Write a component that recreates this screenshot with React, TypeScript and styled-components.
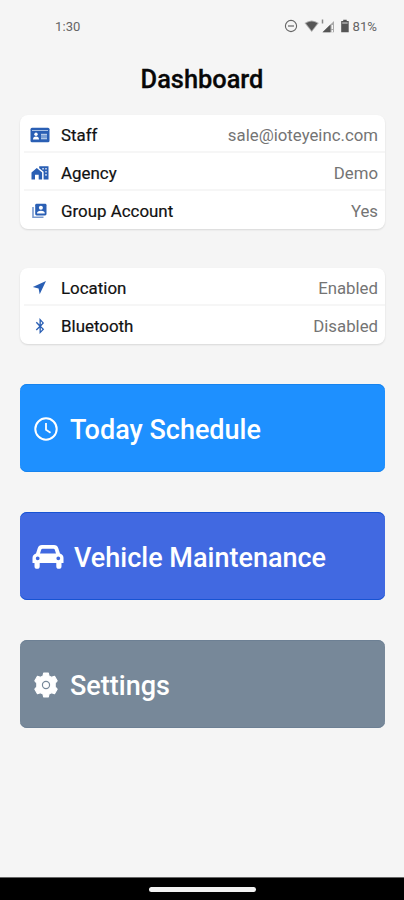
import React from 'react';
import styled, { createGlobalStyle } from 'styled-components';
import { FaBluetoothB } from 'react-icons/fa';

const GlobalStyle = createGlobalStyle`
  * { box-sizing: border-box; }
  body { margin: 0; background: #f5f5f5; font-family: Roboto, sans-serif; }
`;

const Screen = styled.div`
  width: 404px;
  height: 900px;
  display: flex;
  flex-direction: column;
  background: #f5f5f5;
  overflow: hidden;
`;

const StatusBar = styled.header`
  height: 52px;
  padding: 0 27px 0 55px;
  display: flex;
  align-items: center;
  justify-content: space-between;
  color: #656565;
  font-size: 13px;
`;

const Time = styled.span`
  letter-spacing: 0.1px;
`;

const StatusIcons = styled.div`
  display: flex;
  align-items: center;
`;

const Percent = styled.span`
  margin-left: 2px;
  font-size: 13.2px;
`;

const Title = styled.h1`
  margin: 0;
  height: 63px;
  padding-top: 11px;
  line-height: 33px;
  font-size: 25.4px;
  font-weight: 500;
  text-align: center;
  color: #080808;
  -webkit-text-stroke: 0.3px #080808;
`;

const Content = styled.main`
  flex: 1;
  padding: 0 19px 0 20px;
`;

const Card = styled.section`
  background: #fff;
  border-radius: 8px;
  margin-bottom: 39px;
  padding-left: 4px;
  box-shadow: 0 1px 2px rgba(0, 0, 0, 0.12);
`;

const Row = styled.div`
  height: 38px;
  display: flex;
  align-items: center;
  padding: 3px 7px 0 5px;
  border-bottom: 2px solid #f6f6f6;
  font-size: 16.9px;
  &:last-child {
    padding-top: 1px;
    border-bottom: 0;
  }
`;

const RowIcon = styled.span`
  width: 21px;
  display: flex;
  justify-content: center;
  color: #2a5fb4;
`;

const Label = styled.span`
  margin-left: 11px;
  color: #111;
  -webkit-text-stroke: 0.2px #111;
`;

const Value = styled.span`
  margin-left: auto;
  color: #747474;
  font-size: 16.8px;
`;

const ActionButton = styled.button<{ $color: string; $edge: string; $gap: number }>`
  width: 100%;
  height: 88px;
  margin: 0 0 40px;
  padding: 3px 12px 0;
  display: flex;
  align-items: center;
  gap: ${(p) => p.$gap}px;
  border: 0;
  border-radius: 7px;
  box-shadow: inset 0 1px ${(p) => p.$edge}, inset 0 -1px ${(p) => p.$edge};
  background: ${(p) => p.$color};
  color: #fff;
  font: 500 27px/36px Roboto, sans-serif;
`;

const Actions = styled.nav`
  padding-top: 1px;
`;

const ButtonIcon = styled.span<{ $width: number }>`
  width: ${(p) => p.$width}px;
  display: flex;
  justify-content: center;
  margin-top: -2px;
`;

const NavigationBar = styled.footer`
  height: 23px;
  background: #000;
  border-top: 1px solid #666;
  display: flex;
  align-items: center;
  justify-content: center;
`;

const HomeHandle = styled.div`
  width: 107px;
  height: 5px;
  border-radius: 3px;
  background: #f2f2f2;
`;

const StatusGlyphs = () => (
  <svg width="67" height="16" viewBox="0 0 67 16" fill="none">
    <circle cx="7" cy="8" r="5.6" stroke="#666" strokeWidth="1.1" />
    <path d="M4 8h6" stroke="#666" strokeWidth="1.2" />
    <path d="M20.5 5.1Q27.7-.2 34.8 5.1L27.7 14Z" fill="#aaa" />
    <path d="M22 5.3Q27.7 1.5 33.4 5.3L27.7 12.7Z" fill="#555" />
    <path d="M38.5 1.5v4" stroke="#888" strokeWidth="1.5" />
    <path d="M38.5 14.2 50 3v11.2z" fill="#aaa" />
    <path d="M38.5 14.2 46.5 6.4v7.8z" fill="#555" />
    <path d="M48.3 7v4M48.3 12v2" stroke="#f5f5f5" strokeWidth="1.4" />
    <path d="M57.2 3h2V1.8h3.5V3h2v11.2h-7.5z" fill="#555" />
    <path d="M58.2 4h5.5v2h-5.5z" fill="#999" />
  </svg>
);

const StaffIcon = () => (
  <svg width="20" height="16" viewBox="0 0 20 16" fill="none">
    <rect x=".5" y=".8" width="19" height="14.4" rx="1.5" fill="#2a5fb4" />
    <path d="M2 3.5h16" stroke="#a9c1e4" />
    <circle cx="6" cy="7.3" r="1.7" fill="#fff" />
    <path d="M3 12.5q0-3 3-3t3 3z" fill="#fff" />
    <path d="M11 7h6v5h-6z" fill="#7ba0d5" />
    <path d="M11 7.3h6M11 11.8h6" stroke="#d7e3f4" strokeWidth=".8" />
  </svg>
);

const AgencyIcon = () => (
  <svg width="18" height="16" viewBox="0 0 18 16" fill="#2a5fb4">
    <path d="M.5 14.5V7.4L5.8 3l5.3 4.4v7.1H7.7V9.7H4v4.8z" />
    <path d="M8.2 1.2h9.3v13.3H12.6V6.7L8.2 3.2z" />
    <path d="M11.4 3h1.3v1.5h-1.3zM14.4 3h1.2v1.5h-1.2zM14.4 6h1.2v1.6h-1.2zM14.4 9.1h1.2v1.6h-1.2z" fill="#fff" />
  </svg>
);

const GroupIcon = () => (
  <svg width="17" height="16" viewBox="0 0 17 16" fill="none">
    <path d="M2 4v10.2h10.5" stroke="#7899ce" strokeWidth="1.6" />
    <rect x="4.2" y=".8" width="11.3" height="11.6" rx="1.4" fill="#2a5fb4" />
    <circle cx="9.9" cy="4.8" r="2" fill="#fff" />
    <path d="M6 10.6q0-2.8 3.9-2.8t3.9 2.8z" fill="#fff" />
  </svg>
);

const LocationIcon = () => (
  <svg width="15" height="15" viewBox="0 0 15 15" fill="#2a5fb4">
    <path d="M14 1 .8 7.1l5.8 1.3 1.1 5.8z" />
  </svg>
);

const ClockIcon = () => (
  <svg width="26" height="26" viewBox="0 0 26 26" fill="none" stroke="#fff">
    <circle cx="13" cy="13" r="10.7" strokeWidth="2" />
    <path d="M13 7v6.7l4.5 3.1" strokeWidth="1.8" />
  </svg>
);

const CarIcon = () => (
  <svg width="32" height="26" viewBox="0 0 32 26">
    <path
      fill="#fff"
      fillRule="evenodd"
      d="M10 1h12q3.3 0 4.2 3l1.8 5.5q3.5 1 3.5 4.5v5h-2v3.2a2.6 2.6 0 0 1-5.2 0V19H7.7v3.2a2.6 2.6 0 0 1-5.2 0V19h-2v-5q0-3.5 3.5-4.5L5.8 4Q6.7 1 10 1zm.5 3.7q-1 0-1.3 1L8 9.4h16l-1.2-3.7q-.3-1-1.3-1zM5.7 12.4a1.9 1.9 0 1 0 0 3.8 1.9 1.9 0 0 0 0-3.8zm20.6 0a1.9 1.9 0 1 0 0 3.8 1.9 1.9 0 0 0 0-3.8z"
    />
  </svg>
);

const GearIcon = () => (
  <svg width="26" height="26" viewBox="0 0 24 24" fill="none">
    <path
      d="M9.8 1h4.4l.6 2.7 2.2 1.2 2.9-.9 2.4 4.1-1.8 2.1v3.6l1.8 2.1-2.4 4.1-2.9-.9-2.2 1.2-.6 2.7H9.8l-.6-2.7L7 19.1l-2.9.9-2.4-4.1 1.8-2.1v-3.6L1.7 8.1 4.1 4l2.9.9 2.2-1.2z"
      fill="#fff"
      stroke="#fff"
      strokeLinejoin="round"
    />
    <circle cx="12" cy="12" r="3.3" stroke="#778899" strokeWidth="1.1" />
  </svg>
);

const accountRows = [
  { icon: <StaffIcon />, label: 'Staff', value: 'sale@ioteyeinc.com' },
  { icon: <AgencyIcon />, label: 'Agency', value: 'Demo' },
  { icon: <GroupIcon />, label: 'Group Account', value: 'Yes' },
];

const deviceRows = [
  { icon: <LocationIcon />, label: 'Location', value: 'Enabled' },
  { icon: <FaBluetoothB size={16} />, label: 'Bluetooth', value: 'Disabled' },
];

const InfoCard = ({ rows }: { rows: typeof accountRows }) => (
  <Card>
    {rows.map((row) => (
      <Row key={row.label}>
        <RowIcon>{row.icon}</RowIcon>
        <Label>{row.label}</Label>
        <Value>{row.value}</Value>
      </Row>
    ))}
  </Card>
);

export default function App() {
  return (
    <Screen>
      <GlobalStyle />
      <StatusBar>
        <Time>1:30</Time>
        <StatusIcons>
          <StatusGlyphs />
          <Percent>81%</Percent>
        </StatusIcons>
      </StatusBar>
      <Title>Dashboard</Title>
      <Content>
        <InfoCard rows={accountRows} />
        <InfoCard rows={deviceRows} />
        <Actions>
          <ActionButton $color="#1e90ff" $edge="#1683ee" $gap={10}>
            <ButtonIcon $width={28}><ClockIcon /></ButtonIcon>
            Today Schedule
          </ActionButton>
          <ActionButton $color="#4169e1" $edge="#1753d3" $gap={10}>
            <ButtonIcon $width={32}><CarIcon /></ButtonIcon>
            Vehicle Maintenance
          </ActionButton>
          <ActionButton $color="#778899" $edge="#6d8094" $gap={10}>
            <ButtonIcon $width={28}><GearIcon /></ButtonIcon>
            Settings
          </ActionButton>
        </Actions>
      </Content>
      <NavigationBar><HomeHandle /></NavigationBar>
    </Screen>
  );
}
